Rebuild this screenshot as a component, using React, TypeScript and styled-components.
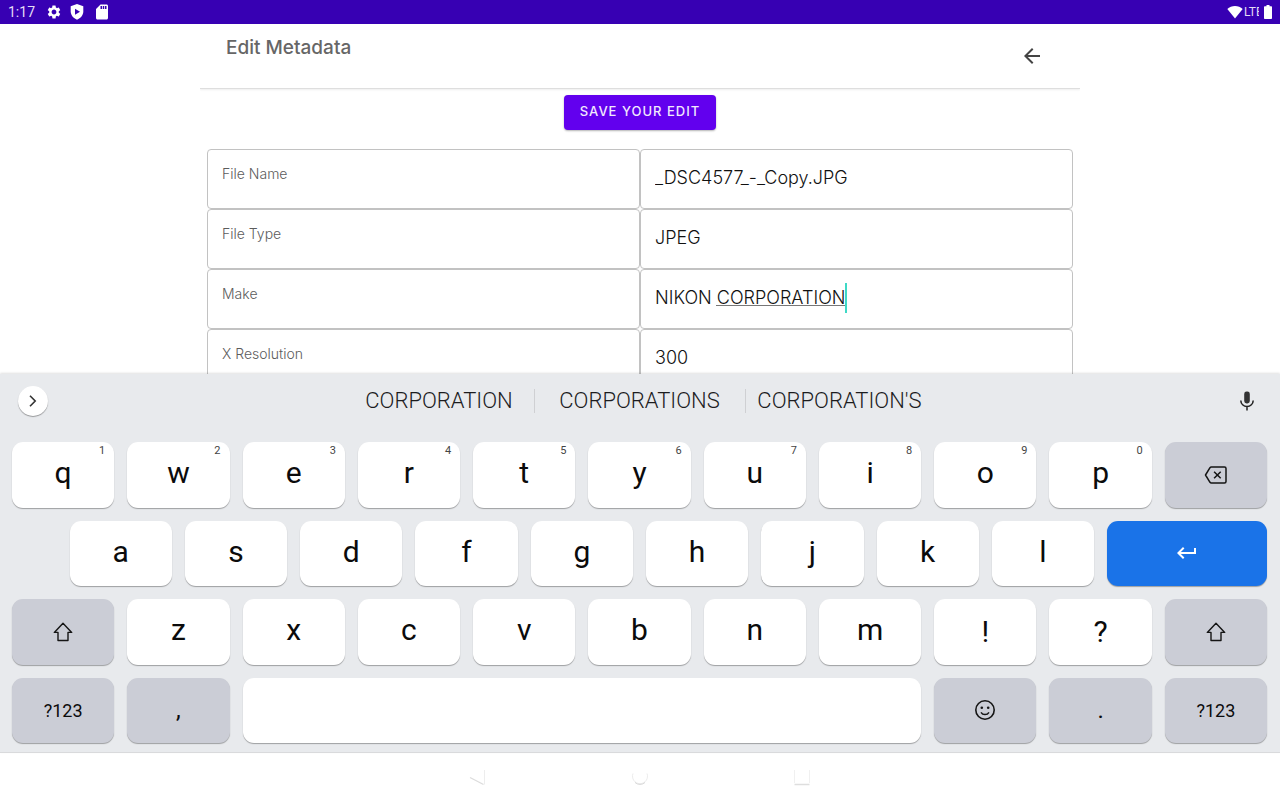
import React from "react";
import styled, { createGlobalStyle, css } from "styled-components";
import { MdSettings, MdSdCard, MdArrowBack, MdKeyboardReturn } from "react-icons/md";

const GlobalStyle = createGlobalStyle`
  * { box-sizing: border-box; }
  body { margin: 0; background: #fff; }
  button, input { font: inherit; color: inherit; border: 0; padding: 0; margin: 0; background: none; }
`;

const uiFont = `Roboto, "Liberation Sans", sans-serif`;
const appFont = `Inter, Roboto, sans-serif`;

const Screen = styled.div`
  height: 100vh;
  display: flex;
  flex-direction: column;
  overflow: hidden;
  font-family: ${uiFont};
`;

const StatusBar = styled.header`
  flex: none;
  height: 24px;
  padding: 0 8px;
  display: flex;
  align-items: center;
  justify-content: space-between;
  background: #3700b3;
  color: #fff;
`;

const StatusGroup = styled.div<{ $gap: number }>`
  display: flex;
  align-items: center;
  gap: ${(p) => p.$gap}px;
`;

const Clock = styled.time`
  font-size: 14px;
  line-height: 24px;
  margin-right: 3px;
  color: #e4dcf5;
`;

const Network = styled.span`
  width: 15px;
  overflow: hidden;
  font-size: 12px;
  line-height: 24px;
  color: #e4dcf5;
`;

const Page = styled.main`
  flex: 1;
  min-height: 0;
  overflow: hidden;
  width: 100%;
  max-width: 880px;
  margin: 0 auto;
  font-family: ${appFont};
`;

const TitleBar = styled.div`
  height: 65px;
  padding: 12px 36px 0 26px;
  display: flex;
  align-items: flex-start;
  justify-content: space-between;
  border-bottom: 1px solid #dedede;
  box-shadow: 0 1px 2px rgba(0, 0, 0, 0.07);
  color: #666;
`;

const Title = styled.h1`
  margin: 0;
  font-size: 19px;
  line-height: 24px;
  font-weight: 500;
`;

const BackButton = styled.button`
  display: flex;
  width: 24px;
  height: 40px;
  align-items: center;
  justify-content: center;
  && { color: #444; }
`;

const Actions = styled.div`
  display: flex;
  justify-content: center;
  padding: 6px 0 19px;
`;

const SaveButton = styled.button`
  && {
    height: 35px;
    padding: 0 16px 3px;
    border-radius: 4px;
    background: #6200ee;
    color: #f1e8fd;
    font-size: 13px;
    font-weight: 500;
    letter-spacing: 1px;
    text-transform: uppercase;
    box-shadow: 0 1px 2px rgba(0, 0, 0, 0.3);
  }
`;

const Fields = styled.form`
  padding: 0 7px;
`;

const FieldRow = styled.div`
  display: grid;
  grid-template-columns: 1fr 1fr;
  height: 60px;
`;

const cell = css`
  border: 1px solid #c2c2c2;
  border-radius: 4px;
  padding: 0 14px;
`;

const FieldLabel = styled.label`
  ${cell}
  padding-top: 14px;
  font-size: 14px;
  line-height: 20px;
  font-weight: 300;
  color: #5c5c5c;
`;

const FieldValue = styled.div`
  ${cell}
  padding-top: 13px;
`;

const TextBox = styled.input<{ $editing?: boolean }>`
  && {
    display: block;
    width: 100%;
    height: 30px;
    font-size: 18px;
    line-height: 30px;
    font-weight: 300;
    color: #111;
    outline: none;
    ${(p) =>
      p.$editing &&
      css`
        width: auto;
        field-sizing: content;
        border-right: 2px solid #3fd9c6;
        background: linear-gradient(#777, #777) right 22px / 129px 1px no-repeat;
      `}
  }
`;

const Keyboard = styled.section`
  flex: none;
  padding: 0 13px 9px 12px;
  background: #e8eaed;
  border-bottom: 1px solid #d9dadc;
  box-shadow: 0 -1px 2px rgba(0, 0, 0, 0.12);
  position: relative;
`;

const SuggestionBar = styled.div`
  display: flex;
  align-items: center;
  justify-content: space-between;
  height: 68px;
  padding: 0 8px 14px 6px;
`;

const ExpandButton = styled.button`
  && {
    display: flex;
    align-items: center;
    justify-content: center;
    width: 30px;
    height: 30px;
    border-radius: 50%;
    background: #fff;
    box-shadow: 0 1px 1px rgba(0, 0, 0, 0.35);
  }
`;

const Suggestions = styled.div`
  display: grid;
  grid-template-columns: 189fr 211fr 189fr;
  width: 589px;
  margin-right: 5px;
`;

const Suggestion = styled.button`
  && {
    height: 24px;
    font-size: 22px;
    line-height: 24px;
    font-weight: 300;
    color: #1c1c1e;
  }
  && + & {
    border-left: 1px solid #cfd0d3;
  }
`;

const MicButton = styled.button`
  display: flex;
  width: 24px;
  height: 30px;
  align-items: center;
  justify-content: center;
`;

const KeyRows = styled.div`
  display: grid;
  grid-template-rows: repeat(4, 1fr);
  row-gap: 13px;
  height: 301px;
`;

const KeyRow = styled.div`
  display: grid;
  grid-template-columns: repeat(22, 1fr);
  column-gap: 13px;
`;

type Tone = "letter" | "modifier" | "enter";
const toneColor: Record<Tone, string> = {
  letter: "#fff",
  modifier: "#cbcdd6",
  enter: "#1a73e8",
};

const KeyCap = styled.button<{ $tone: Tone; $span: number; $start?: number; $size: number; $lift: boolean }>`
  && {
    grid-column: ${(p) => (p.$start ? `${p.$start} / ` : "")}span ${(p) => p.$span};
    position: relative;
    display: flex;
    align-items: center;
    justify-content: center;
    min-width: 0;
    padding-bottom: ${(p) => (p.$lift ? 4 : 0)}px;
    border-radius: 11px;
    background: ${(p) => toneColor[p.$tone]};
    color: ${(p) => (p.$tone === "enter" ? "#fff" : "#0b0b0c")};
    font-size: ${(p) => p.$size}px;
    box-shadow: 0 1px 1px rgba(0, 0, 0, 0.32);
  }
`;

const KeyHint = styled.span`
  position: absolute;
  top: 2px;
  right: 9px;
  font-size: 11px;
  line-height: 13px;
  color: #444;
`;

const NavBar = styled.nav`
  flex: none;
  display: flex;
  align-items: center;
  justify-content: center;
  gap: 138px;
  height: 47px;
`;

const NavButton = styled.button`
  display: flex;
  width: 24px;
  height: 24px;
`;

const ShieldIcon = () => (
  <svg width="14" height="16" viewBox="0 0 14 16" aria-hidden="true">
    <path fill="#fff" d="M7 0 13.3 2.3v5c0 3.9-2.7 7.1-6.3 8.4C3.4 14.4.7 11.2.7 7.3v-5z" />
    <path fill="#3700b3" d="M5 4.7 10 7.7 5 10.7z" />
  </svg>
);

const WifiIcon = () => (
  <svg width="16" height="14" viewBox="0 0 16 14" aria-hidden="true">
    <path fill="#fff" d="M8 13.5.3 4.1C2.4 2.2 5.1 1 8 1s5.6 1.2 7.7 3.1z" />
  </svg>
);

const BatteryIcon = () => (
  <svg width="8" height="14" viewBox="0 0 8 14" aria-hidden="true">
    <path fill="#fff" d="M2.5 0h3v1.3H7c.6 0 1 .4 1 1V13c0 .6-.4 1-1 1H1c-.6 0-1-.4-1-1V2.3c0-.6.4-1 1-1h1.5z" />
  </svg>
);

const ChevronIcon = () => (
  <svg width="12" height="14" viewBox="0 0 12 14" fill="none" stroke="#333" strokeWidth="1.6" aria-hidden="true">
    <path d="M3 1.8 8.2 7 3 12.2" />
  </svg>
);

const MicIcon = () => (
  <svg width="16" height="20" viewBox="0 0 16 20" fill="none" aria-hidden="true">
    <rect x="5.2" y="0.5" width="5.6" height="12" rx="2.4" fill="#333" />
    <path d="M1.8 9.5a6.2 6 0 0 0 12.4 0M8 15.5V19.500" stroke="#222" strokeWidth="1.5" />
  </svg>
);

const BackspaceIcon = () => (
  <svg width="24" height="20" viewBox="0 0 24 20" fill="none" stroke="#151515" strokeWidth="1.5" aria-hidden="true">
    <path strokeLinejoin="round" d="M7.3 2h13.2c.9 0 1.500.6 1.500 1.500v13c0 .9-.6 1.500-1.500 1.500H7.300c-.6 0-1-.3-1.300-.7L1.500 10 6 2.700c.3-.4.7-.7 1.300-.7z" />
    <path d="m10.100 6.700 6.600 6.600m0-6.600-6.600 6.600" />
  </svg>
);

const ShiftIcon = () => (
  <svg width="22" height="22" viewBox="0 0 22 22" fill="none" stroke="#151515" strokeWidth="1.4" aria-hidden="true">
    <path strokeLinejoin="round" d="M11 2.2 19.7 11.4H16V19.500H6V11.400H2.300z" />
  </svg>
);

const SmileIcon = () => (
  <svg width="22" height="22" viewBox="0 0 22 22" fill="none" stroke="#151515" aria-hidden="true">
    <circle cx="11" cy="11" r="9.2" strokeWidth="1.6" />
    <path d="M7 13.300c.8 1.300 2.300 2.200 4 2.200s3.200-.9 4-2.200" strokeWidth="1.5" />
    <circle cx="7.800" cy="8.800" r="1.300" fill="#151515" stroke="none" />
    <circle cx="14.200" cy="8.800" r="1.300" fill="#151515" stroke="none" />
  </svg>
);

interface KeyProps {
  label: string;
  hint?: string;
  icon?: React.ReactNode;
  tone?: Tone;
  span?: number;
  start?: number;
  size?: number;
  blank?: boolean;
}

function Key({ label, hint, icon, tone = "letter", span = 2, start, size = 30, blank }: KeyProps) {
  const isLetter = /^[a-z]$/.test(label);
  return (
    <KeyCap type="button" aria-label={label} $tone={tone} $span={span} $start={start} $size={size} $lift={isLetter}>
      {icon ?? (blank ? null : label)}
      {hint && <KeyHint>{hint}</KeyHint>}
    </KeyCap>
  );
}

const fields = [
  { id: "name", label: "File Name", value: "_DSC4577_-_Copy.JPG" },
  { id: "type", label: "File Type", value: "JPEG" },
  { id: "make", label: "Make", value: "NIKON CORPORATION", editing: true },
  { id: "xres", label: "X Resolution", value: "300" },
];

const hints = "1234567890";

export default function App() {
  return (
    <Screen>
      <GlobalStyle />
      <StatusBar>
        <StatusGroup $gap={8}>
          <Clock>1:17</Clock>
          <MdSettings size={16} />
          <StatusGroup $gap={9}>
            <ShieldIcon />
            <MdSdCard size={18} />
          </StatusGroup>
        </StatusGroup>
        <StatusGroup $gap={5}>
          <StatusGroup $gap={1}>
            <WifiIcon />
            <Network>LTE</Network>
          </StatusGroup>
          <BatteryIcon />
        </StatusGroup>
      </StatusBar>

      <Page>
        <TitleBar>
          <Title>Edit Metadata</Title>
          <BackButton type="button" aria-label="Back">
            <MdArrowBack size={24} />
          </BackButton>
        </TitleBar>
        <Actions>
          <SaveButton type="submit" form="metadata">Save your edit</SaveButton>
        </Actions>
        <Fields id="metadata">
          {fields.map((f) => (
            <FieldRow key={f.id}>
              <FieldLabel htmlFor={f.id}>{f.label}</FieldLabel>
              <FieldValue>
                <TextBox id={f.id} type="text" spellCheck={false} defaultValue={f.value} $editing={f.editing} />
              </FieldValue>
            </FieldRow>
          ))}
        </Fields>
      </Page>

      <Keyboard aria-label="Keyboard">
        <SuggestionBar>
          <ExpandButton type="button" aria-label="More">
            <ChevronIcon />
          </ExpandButton>
          <Suggestions>
            <Suggestion type="button">CORPORATION</Suggestion>
            <Suggestion type="button">CORPORATIONS</Suggestion>
            <Suggestion type="button">CORPORATION'S</Suggestion>
          </Suggestions>
          <MicButton type="button" aria-label="Voice input">
            <MicIcon />
          </MicButton>
        </SuggestionBar>
        <KeyRows>
          <KeyRow>
            {"qwertyuiop".split("").map((k, i) => (
              <Key key={k} label={k} hint={hints[i]} />
            ))}
            <Key label="Backspace" tone="modifier" icon={<BackspaceIcon />} />
          </KeyRow>
          <KeyRow>
            {"asdfghjkl".split("").map((k, i) => (
              <Key key={k} label={k} start={i === 0 ? 2 : undefined} />
            ))}
            <Key label="Enter" tone="enter" span={3} icon={<MdKeyboardReturn size={24} />} />
          </KeyRow>
          <KeyRow>
            <Key label="Shift" tone="modifier" icon={<ShiftIcon />} />
            {"zxcvbnm!?".split("").map((k) => (
              <Key key={k} label={k} />
            ))}
            <Key label="Shift" tone="modifier" icon={<ShiftIcon />} />
          </KeyRow>
          <KeyRow>
            <Key label="?123" tone="modifier" size={18} />
            <Key label="," tone="modifier" size={24} />
            <Key label="Space" span={12} blank />
            <Key label="Emoji" tone="modifier" icon={<SmileIcon />} />
            <Key label="." tone="modifier" size={24} />
            <Key label="?123" tone="modifier" size={18} />
          </KeyRow>
        </KeyRows>
      </Keyboard>

      <NavBar>
        <NavButton type="button" aria-label="Back">
          <svg width="24" height="24" viewBox="0 0 24 24" fill="none" aria-hidden="true">
            <path d="M4 12.5 17.500 19.500" stroke="#dcdcdc" strokeWidth="1.3" />
            <path d="M18.500 5V19.500" stroke="#ededed" />
          </svg>
        </NavButton>
        <NavButton type="button" aria-label="Home">
          <svg width="24" height="24" viewBox="0 0 24 24" fill="none" aria-hidden="true">
            <path d="M5 8.500a7.500 7.500 0 1 0 14 0" stroke="#ececec" />
            <path d="M7 17.500a7.500 7.500 0 0 0 10 0" stroke="#d8d8d8" />
          </svg>
        </NavButton>
        <NavButton type="button" aria-label="Recents">
          <svg width="24" height="24" viewBox="0 0 24 24" fill="none" aria-hidden="true">
            <path d="M4.500 5V18M19.500 5V18" stroke="#f0f0f0" />
            <path d="M4.500 19.500H19.500" stroke="#dedede" strokeWidth="1.5" />
          </svg>
        </NavButton>
      </NavBar>
    </Screen>
  );
}
